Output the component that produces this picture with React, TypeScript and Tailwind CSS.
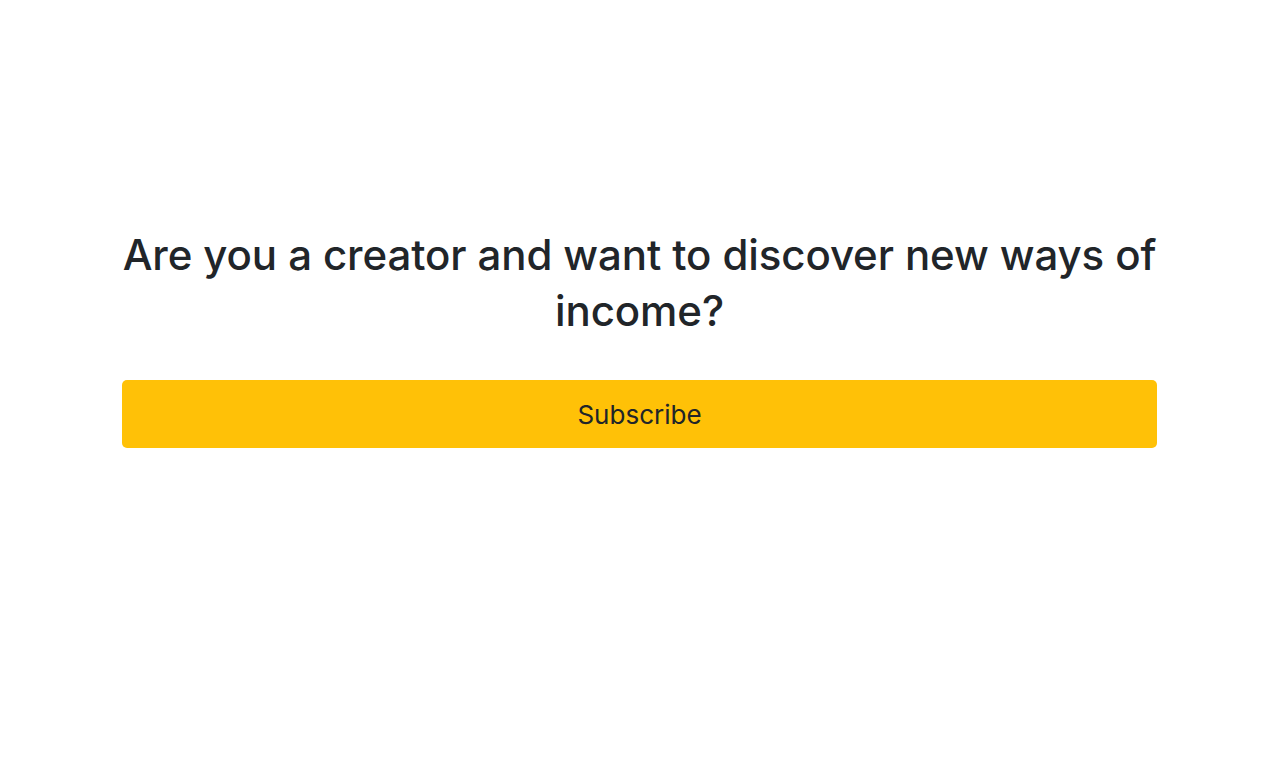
import React from 'react';

const App: React.FC = () => {
  return (
    <div className="min-h-screen w-full bg-white font-['Inter',sans-serif] text-[#212529]">
      <div className="ml-[122px] w-[1035px] pt-[227px]">
        {/* Heading */}
        <h1 className="text-center text-[42px] font-medium leading-[56px] tracking-[-0.1px]">
          Are you a creator and want to discover new ways of income?
        </h1>

        {/* Call to action */}
        <button className="mt-[41px] flex h-[68px] w-full items-center justify-center rounded-[5px] bg-[#ffc107] text-[26px] text-[#212529]">
          Subscribe
        </button>
      </div>
    </div>
  );
};

export default App;
